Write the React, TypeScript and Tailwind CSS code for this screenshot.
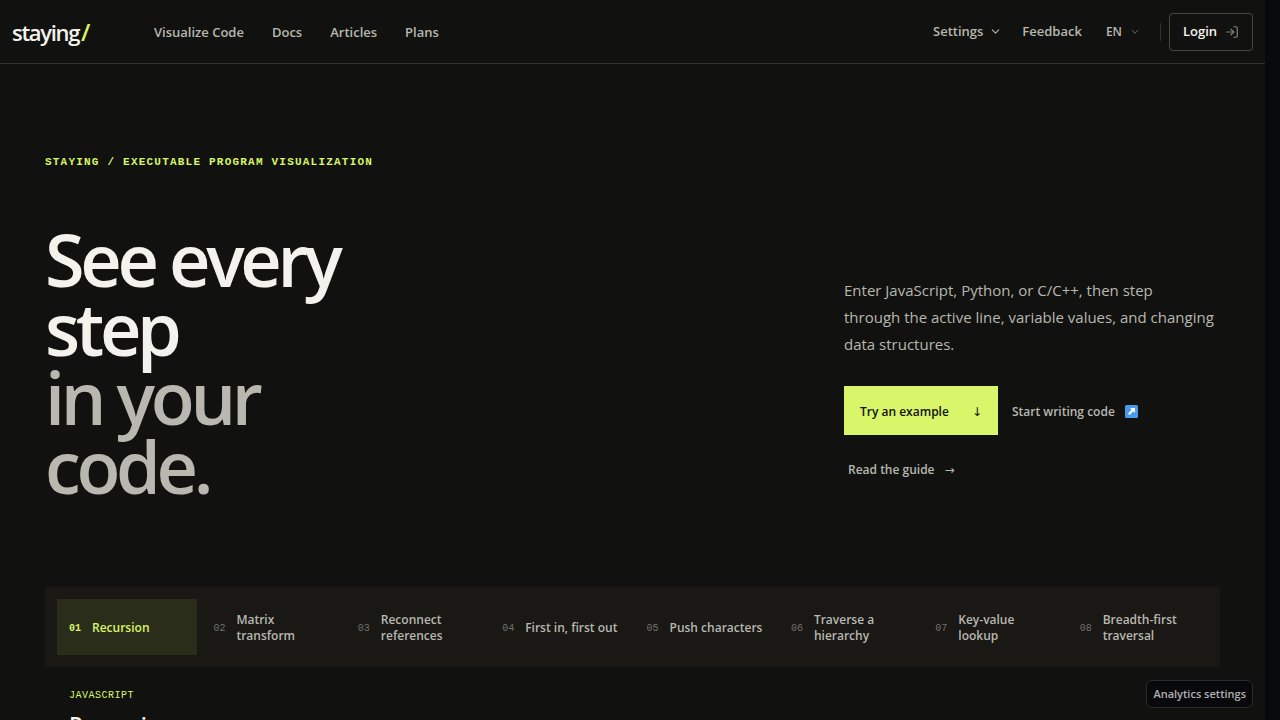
import React from "react";
import { ChevronDown, LogIn } from "lucide-react";

const navLinks = ["Visualize Code", "Docs", "Articles", "Plans"];

const examples = [
  "Recursion",
  "Matrix transform",
  "Reconnect references",
  "First in, first out",
  "Push characters",
  "Traverse a hierarchy",
  "Key-value lookup",
  "Breadth-first traversal",
];

function Header() {
  return (
    <header className="flex h-16 items-center justify-between border-b border-[#32322f] px-3">
      <div className="flex items-center">
        <a href="#" className="w-[142px] text-[22px] font-semibold leading-8 tracking-[-0.06em] text-[#f4f2ec]">
          staying<span className="pl-0.5 text-2xl leading-8 text-[#d9f56a]">/</span>
        </a>
        <nav className="flex items-center gap-7 pt-0.5 text-[13px] font-semibold text-[#b8b7b0]">
          {navLinks.map((label) => (
            <a key={label} href="#">{label}</a>
          ))}
        </nav>
      </div>

      <div className="flex items-center text-[13px] font-semibold text-[#b8b7b0]">
        <button type="button" className="mr-5 flex items-center gap-1.5">
          Settings <ChevronDown size={13} />
        </button>
        <a href="#" className="mr-6">Feedback</a>
        <button type="button" className="mr-5 flex items-center gap-2 text-xs">
          EN <ChevronDown size={10} className="text-[#85847e]" />
        </button>
        <span className="mr-2 h-[18px] w-px bg-[#32322f]" />
        <button
          type="button"
          className="flex h-[38px] w-[84px] items-center justify-center gap-2 rounded border border-[#454541] text-[#f4f2ec]"
        >
          Login <LogIn size={14} className="text-[#85847e]" />
        </button>
      </div>
    </header>
  );
}

function NorthEastIcon() {
  return (
    <svg width="13" height="13" viewBox="0 0 26 26" aria-hidden="true">
      <rect width="26" height="26" rx="3" fill="#4a9bee" />
      <path d="M10 6h10v10l-3.4-3.4-7.4 7.4-3.2-3.2 7.4-7.4z" fill="#fff" />
    </svg>
  );
}

function Hero() {
  return (
    <section>
      <p className="font-['Liberation_Mono',monospace] text-[11px] font-bold leading-4 tracking-[0.11em] text-[#d9f56a]">
        STAYING / EXECUTABLE PROGRAM VISUALIZATION
      </p>
      <div className="mt-[55px] flex items-end justify-between">
        <h1 className="max-w-[360px] text-[72px] font-semibold leading-[69px] tracking-[-0.06em] text-[#f4f2ec]">
          See every step
          <span className="block text-[#b8b7b0]">in your code.</span>
        </h1>
        <div className="mb-[7px] w-[376px]">
          <p className="text-[15px] leading-[27px] text-[#b8b7b0]">
            Enter JavaScript, Python, or C/C++, then step
            <br />
            through the active line, variable values, and changing
            <br />
            data structures.
          </p>
          <div className="mt-7 flex flex-wrap gap-2.5 text-xs font-semibold text-[#b8b7b0]">
            <a href="#" className="flex h-[49px] w-[154px] items-center justify-between bg-[#d9f56a] px-4 pt-0.5 text-[#11120f]">
              Try an example <span className="font-['DejaVu_Sans',sans-serif] font-normal">↓</span>
            </a>
            <a href="#" className="flex h-[49px] items-center gap-2.5 px-1 pt-0.5">
              Start writing code <NorthEastIcon />
            </a>
            <a href="#" className="flex h-[49px] items-center gap-2.5 px-1">
              Read the guide <span className="font-['DejaVu_Sans',sans-serif] font-normal">→</span>
            </a>
          </div>
        </div>
      </div>
    </section>
  );
}

function Examples() {
  return (
    <section className="mt-[86px]">
      <div className="grid grid-cols-8 gap-1 bg-[#191815] p-3">
        {examples.map((label, i) => (
          <button
            key={label}
            type="button"
            className={`flex h-14 items-center gap-[11px] px-3 pt-0.5 text-left ${
              i === 0 ? "bg-[#2b2d1b] text-[#d9f56a]" : "text-[#b8b7b0]"
            }`}
          >
            <span className={`font-['Liberation_Mono',monospace] text-[10px] ${i === 0 ? "font-bold" : "text-[#73726c]"}`}>
              0{i + 1}
            </span>
            <span className="text-xs font-semibold">{label}</span>
          </button>
        ))}
      </div>
      <div className="px-6 pt-[21px]">
        <p className="font-['Liberation_Mono',monospace] text-[10px] leading-4 tracking-wider text-[#d9f56a]">JAVASCRIPT</p>
        <h2 className="mt-1 text-[22px] font-semibold leading-8 text-[#f4f2ec]">Recursion</h2>
      </div>
    </section>
  );
}

export default function App() {
  return (
    <div className="h-screen overflow-hidden bg-[#08090b] pr-[15px] font-['Open_Sans',sans-serif]">
      <div className="min-h-full bg-[#11120f]">
        <Header />
        <main className="px-[45px] pt-[90px]">
          <Hero />
          <Examples />
        </main>
      </div>
      <button
        type="button"
        className="fixed bottom-3 right-[27px] h-7 rounded-md border border-[#2b2b2e] bg-[#08090b] px-1.5 text-[11px] font-semibold text-[#b0b0b2]"
      >
        Analytics settings
      </button>
    </div>
  );
}
